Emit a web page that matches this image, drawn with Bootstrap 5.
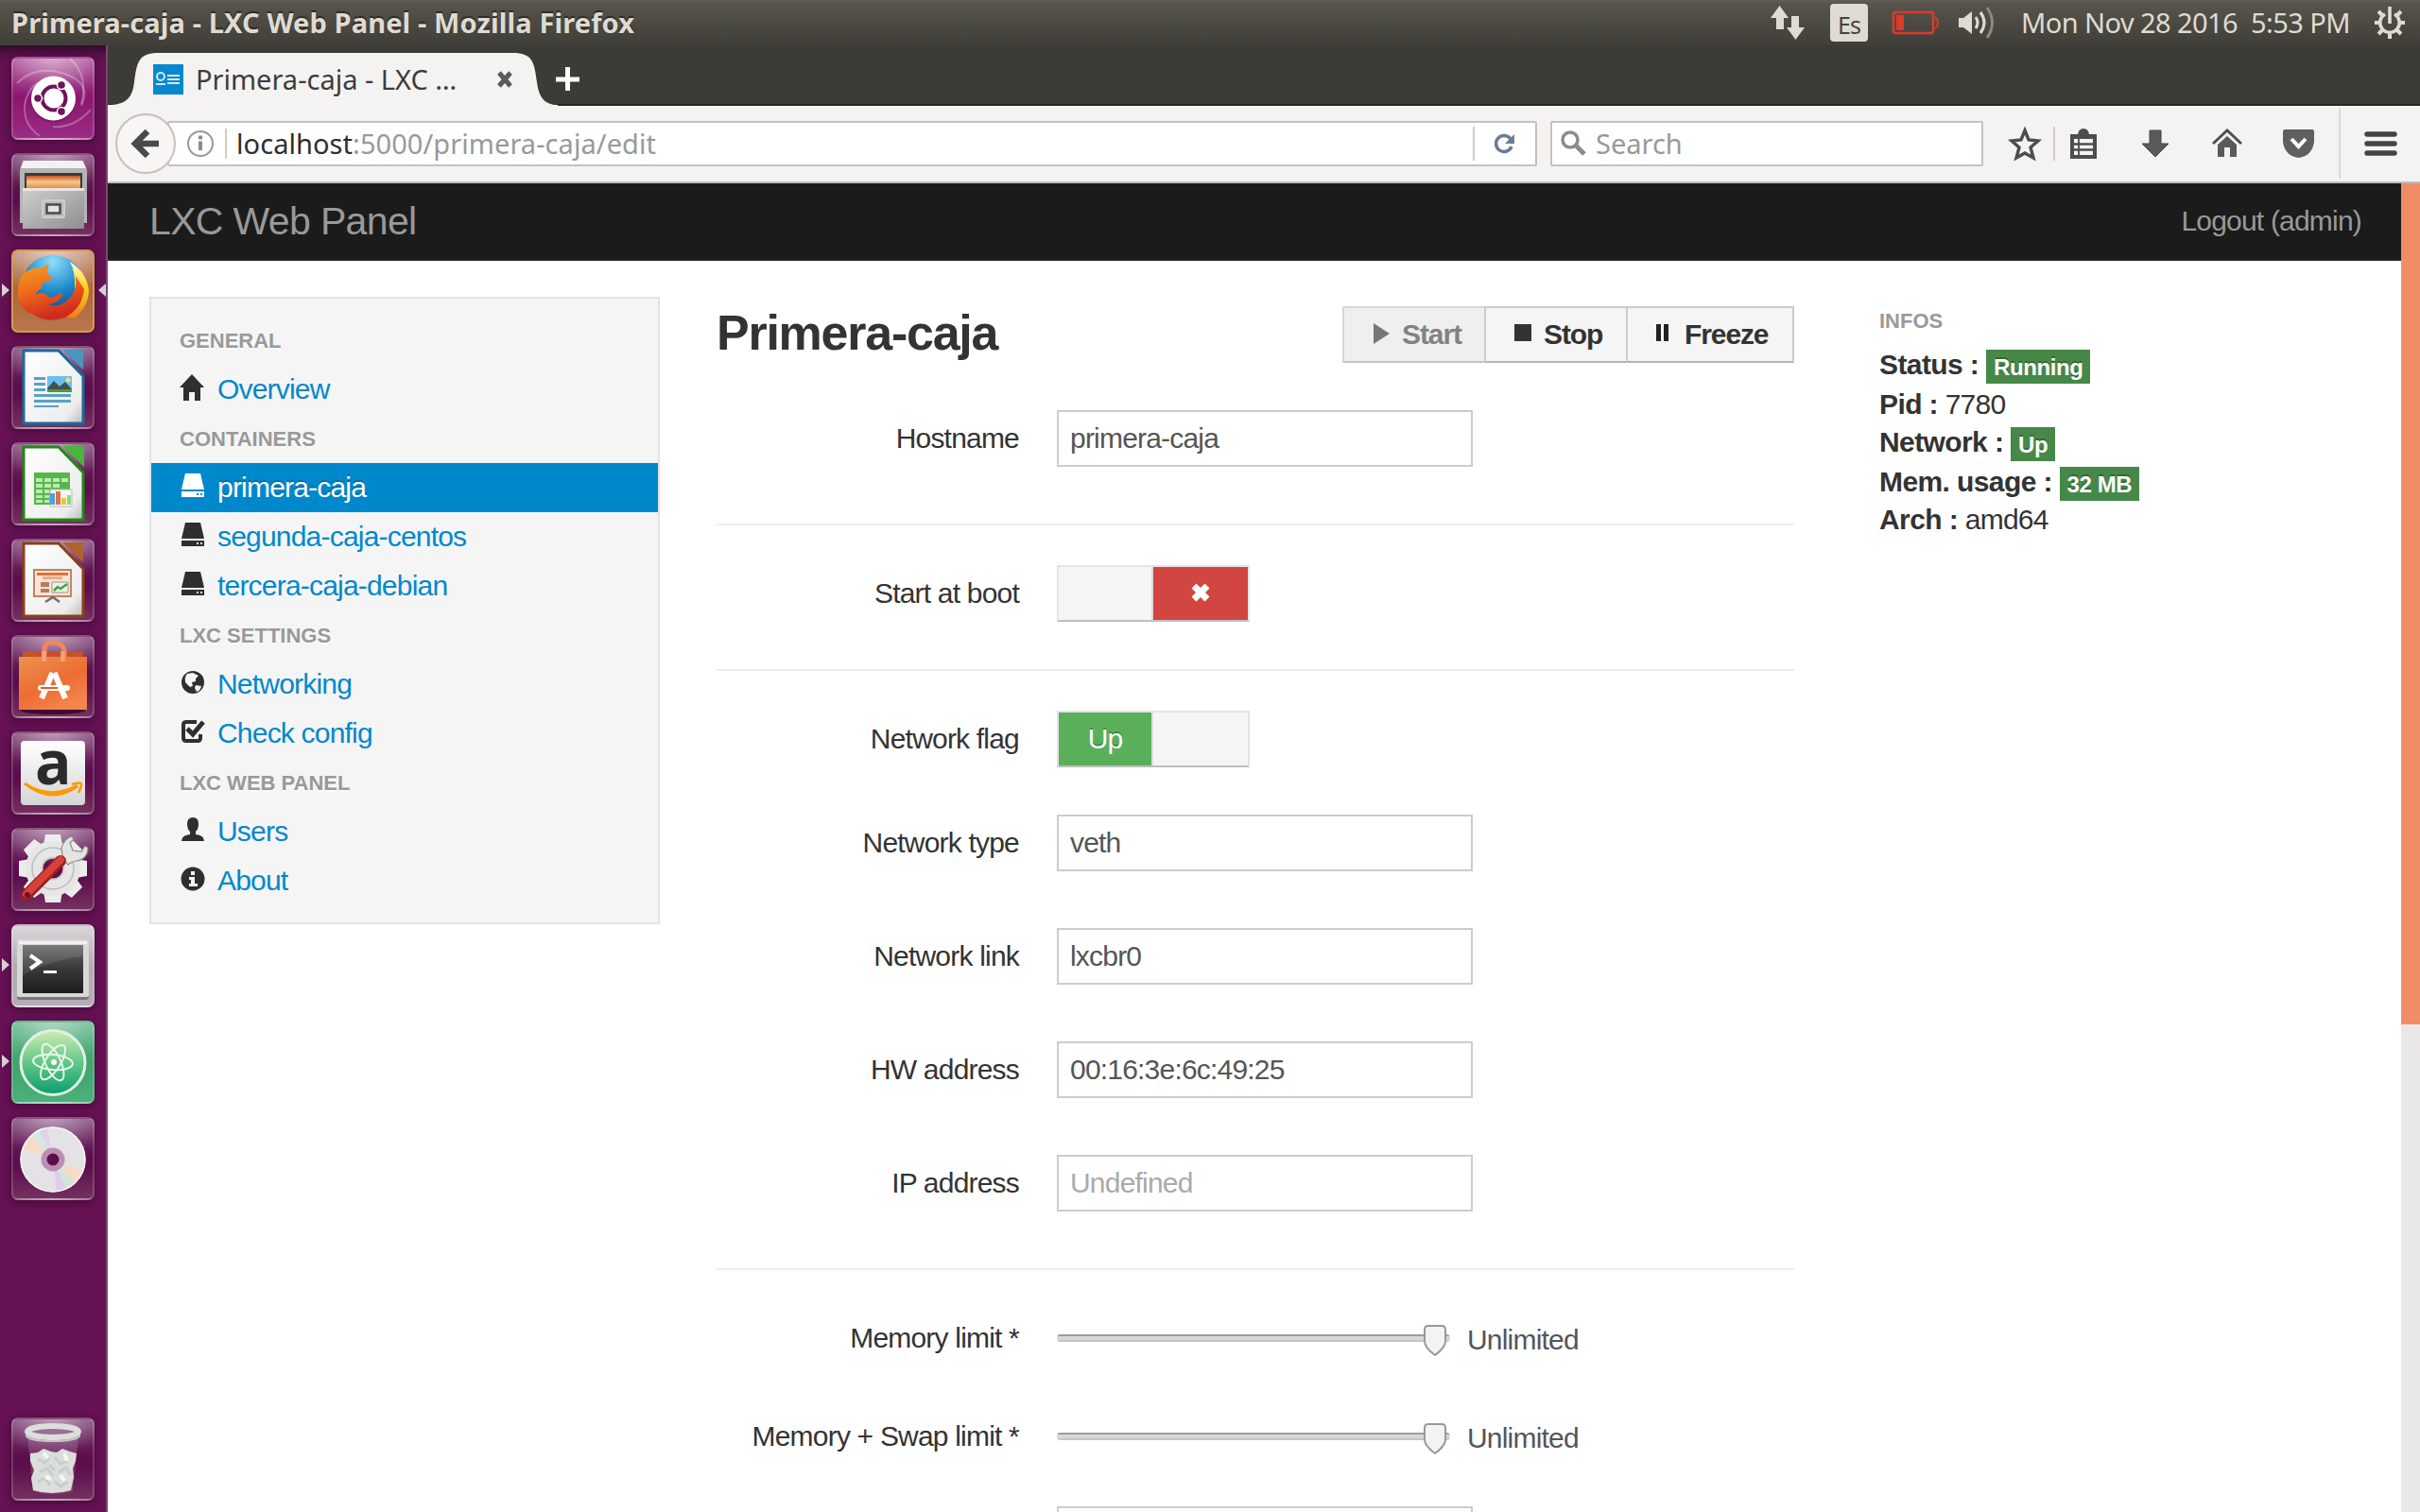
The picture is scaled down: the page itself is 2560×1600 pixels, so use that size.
<!DOCTYPE html>
<html lang="en">
<head>
<meta charset="utf-8">
<title>Primera-caja - LXC Web Panel</title>
<link href="https://cdn.jsdelivr.net/npm/bootstrap@5.3.0/dist/css/bootstrap.min.css" rel="stylesheet">
<style>
html,body{width:2560px;height:1600px;overflow:hidden;background:#fff}
body{font-family:"Liberation Sans",sans-serif;font-size:30px;letter-spacing:-.8px;line-height:40px;color:#333}
.ui{font-family:"Noto Sans","Open Sans",sans-serif;letter-spacing:0}
svg{display:block;flex:none;overflow:visible}
.topbar{height:48px;background:linear-gradient(#5f5d52 0,#5f5d52 2px,#57554b 3px,#3f3e38 48px);color:#dfdbd2;line-height:48px}
.topbar .ttl{font-weight:700;font-size:29px;letter-spacing:.12px;margin-left:12px;text-shadow:0 -2px 1px #2b2a26}
.es{width:40px;height:40px;margin:0 25px 0 27px;background:#dfdbd2;color:#45443e;border-radius:4px;font-size:25px;line-height:44px;text-align:center;letter-spacing:-1px}
.clock{margin:0 26px 0 24px;font-size:29px;letter-spacing:-.57px}
.launch{width:114px;height:1552px;background:linear-gradient(#330a2b 0,#58104a 10px,#651153 22px);border-right:2px solid #7b4676;padding:12px 0 0 12px}
.tile{flex:none;width:88px;height:88px;border-radius:7px;margin-bottom:14px;position:relative;background:radial-gradient(ellipse 70px 40px at 50% -4px,rgba(255,255,255,.55),rgba(255,255,255,.12) 75%,rgba(255,255,255,0) 100%),linear-gradient(#783a6f,#5d0d4c 48%,#5d0d4c 60%,#74305f);border:2px solid rgba(255,255,255,.16);box-shadow:0 2px 6px 2px rgba(40,0,32,.35)}
.tile.t-trash{margin-top:216px;margin-bottom:0}
.tile>svg.ic{position:absolute;left:-2px;top:-2px}
.tile>svg.arl{position:absolute;left:-14px;top:34px}
.tile>svg.arr{position:absolute;left:90px;top:34px}
.t-dash{background:radial-gradient(ellipse 70px 46px at 50% -4px,rgba(255,255,255,.6),rgba(255,255,255,.1) 75%,rgba(255,255,255,0) 100%),linear-gradient(#a84792,#8a1670 50%,#9c2c84)}
.t-ff{background:radial-gradient(ellipse 70px 46px at 50% -4px,rgba(255,255,255,.6),rgba(255,255,255,.1) 75%,rgba(255,255,255,0) 100%),linear-gradient(#c08a6c,#ab683f 50%,#b8774a);border-color:#d49a55}
.t-term{background:linear-gradient(#dcd6db,#b3a9b2 50%,#b5adb5)}
.t-atom{background:radial-gradient(ellipse 70px 46px at 50% -4px,rgba(255,255,255,.5),rgba(255,255,255,.08) 75%,rgba(255,255,255,0) 100%),linear-gradient(#66b98d,#3fa36b 50%,#4bb07a)}
.tabs{height:64px;background:#3c3b37}
.tools{height:82px;background:#f4f3f2;border-bottom:2px solid #c1bfbb}
.tabt{position:absolute;left:93px;top:16px;font-size:29px;color:#3c3c3c}
.urlb{height:48px;background:#fff;border:2px solid #c6c1bb;border-radius:2px;font-size:29px;color:#999}
.vsep{width:2px;background:#d0ccc8}
.webnav{height:82px;background:#1b1b1b;border-bottom:2px solid #252525;color:#999;padding:0 42px 0 44px}
.brandt{font-size:41px;letter-spacing:-.65px;color:#999}
.thumbbar{width:20px;background:#e9e8e7}
.thumbbar>div{height:890px;background:#f08c66}
.side{width:540px;height:664px;background:#f5f5f5;border:2px solid #e3e3e3;padding:18px 0;margin:38px 0 0 44px}
.side .hd{height:52px;line-height:53px;padding-left:30px;font-size:22px;letter-spacing:0;font-weight:700;color:#999;text-shadow:0 2px 0 rgba(255,255,255,.5)}
.side a{height:52px;line-height:52px;padding-left:30px;color:#08c;text-decoration:none;display:flex;align-items:center;gap:12px}
.side a svg{width:28px;height:28px;fill:#2f2f2f;margin-top:-4px}
.side a.on{background:#08c;color:#fff;text-shadow:0 -2px 0 rgba(0,0,0,.2)}
.side a.on svg{fill:#fff}
.maincol{width:1140px;margin-left:60px;padding-top:48px}
.headrow{height:60px;margin-bottom:50px}
.maincol h3{font-size:52px;letter-spacing:-1.25px;font-weight:700;line-height:60px;margin:-2px 0 0}
.bt{width:150px;height:60px;background:#f5f5f5;border:2px solid #ccc;border-bottom-color:#b3b3b3;border-right-width:0;font-weight:700;letter-spacing:-1.1px;line-height:56px;display:flex;align-items:center;padding-left:30px}
.bt.dis{background:#efefef;color:#828282;border-color:#d6d6d6;border-bottom-color:#c6c6c6}
.bt.last{width:178px;border-right-width:2px}
.frow{height:60px;display:flex;align-items:center}
.frow>label{width:320px;margin-right:40px;text-align:right}
.inp{width:440px;height:60px;border:2px solid #ccc;color:#555;padding:0 12px;line-height:56px;background:#fff}
.gap60{margin-top:60px}.gap50{margin-top:50px}.gap44{margin-top:44px}
.rule{height:2px;background:#eee;margin-bottom:42px}
.tog{width:204px;height:60px;border:2px solid #e4e4e4;border-bottom-color:#bfbfbf;background:#f5f5f5;display:flex}
.tog>div{width:98px;height:56px;line-height:56px;display:flex;justify-content:center;align-items:center}
.tog>div+div{width:102px;border-left:2px solid #ddd}
.tog .off{background:#d14641}
.tog .onn{background:#5aaf5a;color:#fff;text-shadow:0 -2px 0 rgba(0,0,0,.25)}
.trk{width:416px;height:8px;border-radius:4px;background:linear-gradient(#9c9c9c 0,#9c9c9c 2px,#d8d8d8 2px,#d8d8d8 6px,#c4c4c4 6px);position:relative}
.trk svg{position:absolute;left:387px;top:-10px}
.unl{margin:3px 0 0 18px;color:#555}
.cutrow{height:6px;overflow:hidden;align-items:flex-start}
.info{margin:48px 0 0 90px;white-space:nowrap}
.info .cap{font-size:22px;letter-spacing:0;font-weight:700;color:#999;line-height:32px;height:42px}
.info .ln{height:40px;display:flex}
.info .ln.tall{height:42px}
.info b{letter-spacing:-.6px;white-space:pre}
.lab{background:#468847;color:#fff;font-weight:700;font-size:24px;letter-spacing:-.4px;line-height:37px;height:36px;padding:0 8px;text-shadow:0 -2px 0 rgba(0,0,0,.25);margin-top:4px}
</style>
</head>
<body>
<div class="topbar ui d-flex align-items-center">
  <span class="ttl">Primera-caja - LXC Web Panel - Mozilla Firefox</span>
  <div class="ms-auto d-flex align-items-center">
    <svg width="36" height="36" viewBox="0 0 36 36" fill="#dfdbd2"><path d="M6 25V13H0L9.500 0 19 13h-5v12zM22 11h8v12h6L26.500 36 17 23h5z"/></svg>
    <div class="es">Es</div>
    <svg width="50" height="28" viewBox="0 0 50 28"><rect x="2" y="3" width="42" height="22" rx="2" fill="none" stroke="#df382c" stroke-width="2.600"/><path d="M5 6h8v16H5z" fill="#df382c"/><path d="M46 8q3 2 3 6t-3 6" fill="none" stroke="#df382c" stroke-width="2"/></svg>
    <svg width="42" height="36" viewBox="0 0 42 36" style="margin-left:21px" fill="none" stroke="#dfdbd2" stroke-width="3"><path d="M0 13h5l9-7v24l-9-7H0z" fill="#dfdbd2" stroke="none"/><path d="M18 12q4 6 0 12"/><path d="M23 7q8 11 0 22"/><path d="M30 2q11 16 0 32" stroke="#8b887e"/></svg>
    <span class="clock">Mon Nov 28 2016&nbsp; 5:53 PM</span>
    <svg width="32" height="34" viewBox="-16 -17 32 34" style="margin-right:16px" fill="none" stroke="#dfdbd2"><path d="M-5-9A10.300 10.300 0 1 0 5-9" stroke-width="3.600"/><path d="M0-17V1" stroke-width="3.600"/><path d="M-12 0h-4M12 0h4M0 12v5M-8-8l-4-4M8-8l4-4M-8 8l-4 4M8 8l4 4" stroke-width="4"/></svg>
  </div>
</div>
<div class="d-flex">
<div class="launch d-flex flex-column">
  <div class="tile t-dash"><svg class="ic" width="88" height="88" viewBox="0 0 88 88"><g fill="none" stroke="#fff" stroke-opacity=".28" stroke-width="2"><path d="M6 28Q26 8 56 18T74 52"/><path d="M62 2Q82 20 74 50"/><path d="M84 56Q66 76 44 74"/><path d="M30 84Q10 70 15 46 20 32 28 28"/></g><circle cx="44.500" cy="45.500" r="24" fill="#500c42" opacity=".35"/><circle cx="44.500" cy="44" r="23.500" fill="#fff"/><circle cx="45" cy="44" r="12.500" fill="none" stroke="#6f1459" stroke-width="4"/><g fill="#6f1459" stroke="#fff" stroke-width="1.500"><circle cx="28" cy="44" r="4.500"/><circle cx="53" cy="30" r="4.500"/><circle cx="53" cy="58" r="4.500"/></g></svg></div>
  <div class="tile"><svg class="ic" width="88" height="88" viewBox="0 0 88 88"><defs><linearGradient id="g1" x2="1" y2="1"><stop stop-color="#d0d0d0"/><stop offset="1" stop-color="#8e8e8e"/></linearGradient><linearGradient id="g2" x2="0" y2="1"><stop stop-color="#c8532a"/><stop offset=".5" stop-color="#f5c88e"/><stop offset="1" stop-color="#e58e3e"/></linearGradient></defs><path d="M12 8h64l4 10v56H9V18z" fill="#b4b4b4"/><path d="M13 8h62l4 8H10z" fill="#f2f2f2"/><path d="M14 21h61v18H14z" fill="#3d3a38"/><path d="M16 24h57v13H16z" fill="url(#g2)"/><path d="M12 37h65v43H12z" fill="url(#g1)"/><path d="M12 37h65v3H12z" fill="#e6e6e6"/><rect x="33" y="50" width="23" height="18" rx="2" fill="#bcbcbc" stroke="#cfcfcf" stroke-width="2"/><path d="M37.500 54.500h14v9h-14z" fill="#e4e4e4" stroke="#4a4a4a" stroke-width="2.500"/></svg></div>
  <div class="tile t-ff"><svg class="arl" width="10" height="14"><path d="M2 0l8 7-8 7z" fill="#d5d0d4"/></svg><svg class="arr" width="10" height="14"><path d="M8 0L0 7l8 7z" fill="#d5d0d4"/></svg><svg class="ic" width="88" height="88" viewBox="0 0 88 88"><defs><radialGradient id="f1" cx=".5" cy=".1" r="1"><stop stop-color="#8fe0fb"/><stop offset=".45" stop-color="#1f8ccc"/><stop offset=".85" stop-color="#143a7c"/></radialGradient><linearGradient id="f2" x2=".3" y2="1"><stop stop-color="#f8a11f"/><stop offset=".5" stop-color="#ee6a1c"/><stop offset="1" stop-color="#cf2a1d"/></linearGradient><linearGradient id="f3" x2="0" y2="1"><stop stop-color="#fffbd0"/><stop offset=".45" stop-color="#ffd51c"/><stop offset="1" stop-color="#ef7a1b"/></linearGradient></defs><circle cx="44" cy="40" r="34" fill="url(#f1)"/><path d="M62 13Q80 24 82 44 81 62 66 73L52 70Q68 56 67 40 68 24 62 13z" fill="url(#f3)"/><path d="M15 15q-3 5-1 9l9-4q7-1 10 0 3-4 7-5-3 7-1 12 4 0 4 3-2 4-9 5-2 2-2 6-5 2-6 7 8-5 13 2 5 2 11-3 3-2 4 1-4 9-15 10 12 5 22-6 9-8 7-24l9 14q-2 20-20 30-20 7-35-4Q5 63 7 42 8 30 14 25z" fill="url(#f2)"/></svg></div>
  <div class="tile"><svg class="ic" width="88" height="88" viewBox="0 0 88 88"><defs><linearGradient id="pg" x2="1" y2="1"><stop stop-color="#fff"/><stop offset=".8" stop-color="#ededed"/><stop offset="1" stop-color="#bbb"/></linearGradient></defs><path d="M13 5h37l26 27v50H13z" fill="url(#pg)" stroke="#196c9b" stroke-width="3"/><path d="M54 4h22v21z" fill="#4b95c0"/><path d="M24 33h12v3H24zM24 39h12v3H24zM24 45h12v3H24zM24 51h39v3H24zM24 57h39v3H24zM24 63h26v2H24z" fill="#5b9fc6"/><path d="M38 32h26v17H38z" fill="#6cc0ee"/><path d="M38 45l7-8 6 6 6-5 7 8v3H38z" fill="#43524e"/><path d="M38 46h26v3H38z" fill="#4f9a36"/><circle cx="60" cy="36" r="2.500" fill="#f8e45a"/></svg></div>
  <div class="tile"><svg class="ic" width="88" height="88" viewBox="0 0 88 88"><path d="M13 5h37l26 27v50H13z" fill="url(#pg)" stroke="#1f8a15" stroke-width="3"/><path d="M54 4h23v22z" fill="#48b63a"/><path d="M24 32h38v34H24z" fill="#55b749"/><path d="M26 38h7v4h-7zM35 38h7v4h-7zM44 38h7v4h-7zM53 38h7v4h-7zM26 44h7v4h-7zM35 44h7v4h-7zM44 44h7v4h-7zM26 50h7v4h-7zM35 50h5v4h-5zM26 56h7v3h-7zM35 56h5v3h-5zM26 61h7v3h-7zM35 61h5v3h-5z" fill="#bfe8b4"/><path d="M41 50h23v18H41z" fill="#f6f6f6" stroke="#bbb"/><path d="M41 54h5v12h-5z" fill="#4aa3dd"/><path d="M47 52h5v14h-5z" fill="#d9734b"/><path d="M53 59h5v7h-5z" fill="#f0c33a"/><path d="M59 56h4v10h-4z" fill="#8bd97f"/></svg></div>
  <div class="tile"><svg class="ic" width="88" height="88" viewBox="0 0 88 88"><path d="M13 5h37l26 27v50H13z" fill="url(#pg)" stroke="#8a4216" stroke-width="3"/><path d="M54 4h22v21z" fill="#b0622f"/><path d="M24 33h39v28H24z" fill="#fbe3d5" stroke="#c5825c" stroke-width="2"/><path d="M27 36h33v3H27z" fill="#d9713e"/><path d="M33 40h21v3H33z" fill="#efa98a"/><path d="M31 46h9v5h-9zM31 53h9v4h-9z" fill="#b97c59"/><path d="M43 46h17v11H43z" fill="#e9f3e6" stroke="#979797"/><path d="M45 55l4-4 3 2 7-5" stroke="#43a535" stroke-width="2.500" fill="none"/><path d="M36 67l8-5 7 5" fill="none" stroke="#6f6f6f" stroke-width="2.500"/></svg></div>
  <div class="tile"><svg class="ic" width="88" height="88" viewBox="0 0 88 88"><defs><linearGradient id="b1" x2=".6" y2="1"><stop stop-color="#e9944f"/><stop offset=".6" stop-color="#ee6c31"/><stop offset="1" stop-color="#f3854d"/></linearGradient></defs><ellipse cx="44" cy="80" rx="34" ry="4" fill="#2a001f" opacity=".7"/><path d="M12 17h64v10H12z" fill="#c8502a"/><path d="M35 29V15q0-7 9-7t12 7v14" fill="none" stroke="#f08660" stroke-width="5"/><path d="M8 23h72v56H8z" fill="url(#b1)"/><path d="M34.500 28V17M54.500 28V17" stroke="#f5a27e" stroke-width="4.500"/><path d="M32 67l11.500-27M57 67L45.500 40" stroke="#fff" stroke-width="6" fill="none"/><path d="M31 56h28" stroke="#fff" stroke-width="6" stroke-linecap="round"/><path d="M31 56h18" stroke="#e45f2a" stroke-width="2"/></svg></div>
  <div class="tile"><svg class="ic" width="88" height="88" viewBox="0 0 88 88"><defs><linearGradient id="a1" x2="0" y2="1"><stop stop-color="#fff"/><stop offset="1" stop-color="#d5d5d5"/></linearGradient></defs><rect x="10" y="10" width="68" height="68" rx="4" fill="url(#a1)"/><text x="44" y="56" text-anchor="middle" font-family="Open Sans" font-weight="700" font-size="64" fill="#2b2b2b">a</text><path d="M14 56q28 22 56 3l-1-2q-28 15-54-2z" fill="#f90" stroke="#f90" stroke-width="1.500"/><path d="M64 56q9-3 10 0 0 3-3 9" fill="none" stroke="#f90" stroke-width="2.600"/></svg></div>
  <div class="tile"><svg class="ic" width="88" height="88" viewBox="0 0 88 88"><g transform="translate(44 43)"><g fill="#ececec"><path id="tt" d="M-8-36H8l2 12h-20z"/><use href="#tt" transform="rotate(45)"/><use href="#tt" transform="rotate(90)"/><use href="#tt" transform="rotate(135)"/><use href="#tt" transform="rotate(180)"/><use href="#tt" transform="rotate(225)"/><use href="#tt" transform="rotate(270)"/><use href="#tt" transform="rotate(315)"/></g><circle r="20" fill="none" stroke="#e6e6e6" stroke-width="18"/><circle r="22" fill="none" stroke="#bdbdbd" stroke-width="1.500"/><circle r="11.500" fill="none" stroke="#ccc" stroke-width="2"/></g><path d="M55 34l-2-12q2-10 11-13l2 3-4 4 3 8 9 1 4-6 3 2q0 12-12 14-6 1-9 4z" fill="#e4e4e0" stroke="#888" stroke-width="1.200"/><path d="M16 71l36-36" stroke="#9d1f1a" stroke-width="12" stroke-linecap="round"/><path d="M16 70l36-36" stroke="#d9403a" stroke-width="8" stroke-linecap="round"/><circle cx="17" cy="71" r="3" fill="#6a0f2a"/></svg></div>
  <div class="tile t-term"><svg class="arl" width="10" height="14"><path d="M2 0l8 7-8 7z" fill="#d5d0d4"/></svg><svg class="ic" width="88" height="88" viewBox="0 0 88 88"><defs><linearGradient id="k1" x2="0" y2="1"><stop stop-color="#6b6b6b"/><stop offset=".5" stop-color="#383838"/><stop offset="1" stop-color="#1c1c1c"/></linearGradient></defs><rect x="6" y="17" width="76" height="63" rx="3" fill="#777"/><rect x="6" y="16" width="76" height="61" rx="2" fill="#d8d8d6"/><rect x="8" y="18" width="72" height="3" fill="#f2f2f2"/><rect x="12" y="22" width="64" height="51" fill="url(#k1)"/><path d="M12 22h64v12Q46 36 12 54z" fill="#fff" opacity=".1"/><path d="M20 33l10 7-10 7" fill="none" stroke="#fff" stroke-width="4"/><path d="M34 50.500h14" stroke="#fff" stroke-width="3"/></svg></div>
  <div class="tile t-atom"><svg class="arl" width="10" height="14"><path d="M2 0l8 7-8 7z" fill="#d5d0d4"/></svg><svg class="ic" width="88" height="88" viewBox="0 0 88 88"><defs><linearGradient id="o1" x2="0" y2="1"><stop stop-color="#cdecb0"/><stop offset=".5" stop-color="#62c78a"/><stop offset="1" stop-color="#0a9d6c"/></linearGradient></defs><circle cx="44" cy="44.500" r="34" fill="url(#o1)" stroke="#e2efe6" stroke-width="3"/><g fill="none" stroke="#e6f7e9" stroke-width="2"><ellipse cx="44" cy="44" rx="21" ry="8" transform="rotate(5 44 44)"/><ellipse cx="44" cy="44" rx="21" ry="8" transform="rotate(65 44 44)"/><ellipse cx="44" cy="44" rx="21" ry="8" transform="rotate(122 44 44)"/></g><circle cx="45" cy="44" r="3" fill="#fff"/></svg></div>
  <div class="tile"><svg class="ic" width="88" height="88" viewBox="0 0 88 88"><circle cx="44" cy="45" r="34.500" fill="#e4e2e4"/><path d="M44 45L12 33q3-9 9-14z" fill="#f6dcc8"/><path d="M44 45L21 19q4-4 8-6z" fill="#d3e8de"/><path d="M44 45L29 13q5-2 9-2z" fill="#e0d2ea"/><path d="M44 45l31 13q-3 7-8 12z" fill="#f6dcc8"/><path d="M44 45l23 26q-4 3-8 5z" fill="#cfe6dc"/><path d="M44 45l14 31q-5 2-10 2z" fill="#dccdea"/><circle cx="44" cy="45" r="34" fill="none" stroke="#f6f6f6" stroke-width="1.500"/><circle cx="44" cy="45" r="9.500" fill="#6d1a5b" stroke="#bb8fb4" stroke-width="6"/><circle cx="44" cy="45" r="6" fill="#590f49"/></svg></div>
  <div class="tile t-trash"><svg class="ic" width="88" height="88" viewBox="0 0 88 88"><path d="M17 20l6 58q20 6 42 0l6-58z" fill="#b78fae" opacity=".3"/><path d="M20 38l8-1 6-4 8 3 6 1 6-4 8 3 7 2-1 8-3 8 1 9-3 14q-20 6-40 0l-2-13 3-8-4-10z" fill="#dcdedb"/><path d="M28 44l8 4 4-6M46 42l6 7 8-3M30 58l8-4 6 8M50 58l8-5 5 8M28 68l8-4 5 8M46 68l6 5 8-5M40 50l6 6" fill="none" stroke="#c9ccc7" stroke-width="3"/><path d="M34 38l5 5M56 38l3 8M36 63l6 2M52 61l4 6" stroke="#f6f7f5" stroke-width="4"/><ellipse cx="44" cy="15" rx="27" ry="6" fill="#9a6f92" stroke="#dcdedc" stroke-width="6"/><path d="M15 17q5 7 29 7t29-7v3q-4 6-29 6t-29-6z" fill="#c3c6c3"/></svg></div>
</div>
<div class="flex-grow-1">
  <div class="tabs ui">
    <div class="d-flex position-relative">
      <svg width="2446" height="64"><rect y="62" width="2446" height="2" fill="#272623"/><path d="M0 64v-1c20 0 26-8 28-24 3-21 4-31 26-31h374c22 0 23 10 26 31 2 16 8 24 22 24v1z" fill="#f4f3f2"/><path d="M48 20h32v32H48z" fill="#0a88cf"/><g fill="none" stroke="#cfe9f8" stroke-width="2"><circle cx="56" cy="33" r="4"/><path d="M63 32h13M63 36h13M63 40h13M51 41h10"/></g><path d="M414 29l12 14M426 29l-12 14" stroke="#5a5a5a" stroke-width="5"/><path d="M474 36h25M486.500 23v25" stroke="#fff" stroke-width="5"/></svg>
      <span class="tabt">Primera-caja - LXC …</span>
    </div>
  </div>
  <div class="tools ui d-flex align-items-center">
    <svg width="66" height="66" viewBox="0 0 66 66" style="margin-left:8px;z-index:2"><circle cx="32" cy="33" r="31" fill="#f7f6f5" stroke="#c6c1bb" stroke-width="2"/><path d="M34 20L21 33l13 13M23 33h23" fill="none" stroke="#4a4a4a" stroke-width="6.500"/></svg>
    <div class="urlb d-flex align-items-center" style="width:1449px;margin-left:-11px;padding-left:18px">
      <svg width="30" height="30" viewBox="0 0 30 30"><circle cx="15" cy="15" r="13" fill="none" stroke="#999" stroke-width="2"/><path d="M13 12.500h4V22h-4z" fill="#8a8a8a"/><circle cx="15" cy="8.500" r="2.200" fill="#8a8a8a"/></svg>
      <div class="vsep" style="height:32px;margin:0 10px 0 11px"></div>
      <span style="letter-spacing:.06px"><span style="color:#2e2e2e">localhost</span>:5000/primera-caja/edit</span>
      <div class="vsep ms-auto" style="height:36px"></div>
      <svg width="28" height="28" viewBox="0 0 28 28" style="margin:0 18px 0 18px"><path d="M20 9A8.500 8.500 0 1 0 21 17" fill="none" stroke="#6b7d92" stroke-width="3.500"/><path d="M24 4v10H14z" fill="#6b7d92"/></svg>
    </div>
    <div class="urlb d-flex align-items-center" style="width:458px;margin-left:14px;padding-left:8px">
      <svg width="30" height="30" viewBox="0 0 30 30"><circle cx="11" cy="11" r="8" fill="none" stroke="#8b8b8b" stroke-width="3.500"/><path d="M17 17l9 9" stroke="#8b8b8b" stroke-width="5"/></svg>
      <span style="margin-left:8px">Search</span>
    </div>
    <svg width="34" height="36" viewBox="0 0 34 36" style="margin-left:27px"><path d="M17 4l4 10 10 1-8 7 3 11-9-5-9 5 3-11-8-7 10-1z" fill="none" stroke="#4d4d4d" stroke-width="3.400"/></svg>
    <div class="vsep" style="height:36px;margin:0 16px 0 13px"></div>
    <svg width="28" height="32" viewBox="0 0 28 32"><path d="M0 6h8q1-6 6-6t6 6h8v26H0z" fill="#4d4d4d"/><path d="M4 11h20v17H4z" fill="#f4f3f2"/><path d="M4 16.500h20M4 22.500h20" stroke="#4d4d4d" stroke-width="2.500"/><path d="M9 11v17" stroke="#4d4d4d" stroke-width="1.800"/></svg>
    <svg width="28" height="30" viewBox="0 0 28 30" style="margin-left:48px"><path d="M8 1h12v14h8L14 29 0 15h8z" fill="#5a5a5a" stroke="#454545"/></svg>
    <svg width="32" height="30" viewBox="0 0 32 30" style="margin-left:46px"><path d="M1 15L16 1l15 14" fill="none" stroke="#4f4f4f" stroke-width="3"/><path d="M6 16L16 7l10 9v13h-7V19h-6v10H6z" fill="#5a5a5a"/></svg>
    <svg width="33" height="30" viewBox="0 0 33 30" style="margin-left:43px"><path d="M0 2q0-2 2-2h29q2 0 2 2v11q-2 15-16.500 17Q2 28 0 13z" fill="#5f5f5f"/><path d="M9 10l7.500 8L24 10" fill="none" stroke="#fff" stroke-width="4"/></svg>
    <div class="vsep" style="height:74px;margin:0 26px;background:#dad8d6"></div>
    <svg width="33" height="28" viewBox="0 0 33 28"><path d="M2 4h29M2 14h29M2 24h29" stroke="#444" stroke-width="5.500" stroke-linecap="round"/></svg>
  </div>
  <div class="d-flex" style="height:1406px">
    <div class="flex-grow-1">
      <div class="webnav d-flex align-items-center justify-content-between"><span class="brandt">LXC Web Panel</span><span>Logout (admin)</span></div>
      <div class="d-flex align-items-start">
        <div class="side">
          <div class="hd">GENERAL</div>
          <a href="#"><svg viewBox="0 0 28 28"><path d="M13 0l13 14h-4v14h-6v-9h-6v9H4V14H0z"/></svg>Overview</a>
          <div class="hd">CONTAINERS</div>
          <a href="#" class="on"><svg viewBox="0 0 28 28"><path id="dk" fill-rule="evenodd" d="M6 1h16l4 17H2zM2 20h24v6H2zM18 22v2h2v-2zM22 22v2h2v-2z"/></svg>primera-caja</a>
          <a href="#"><svg viewBox="0 0 28 28"><use href="#dk"/></svg>segunda-caja-centos</a>
          <a href="#"><svg viewBox="0 0 28 28"><use href="#dk"/></svg>tercera-caja-debian</a>
          <div class="hd">LXC SETTINGS</div>
          <a href="#"><svg viewBox="0 0 28 28"><circle cx="14" cy="14" r="12"/><path d="M8 5l6-1 4 2 2 1-3 3v3l-4 1 1 4-3 1-5-5q-1-6 2-9zM17 17l6 1q-1 5-5 6l-2-4z" fill="#f5f5f5"/></svg>Networking</a>
          <a href="#"><svg viewBox="0 0 28 28"><path d="M18 4H7Q4 4 4 7v14q0 3 3 3h12q3 0 3-3v-4" fill="none" stroke="#2f2f2f" stroke-width="4"/><path d="M8 11l6 6L25 4" fill="none" stroke="#2f2f2f" stroke-width="5"/></svg>Check config</a>
          <div class="hd">LXC WEB PANEL</div>
          <a href="#"><svg viewBox="0 0 28 28"><path d="M14 1q6 0 6 7 0 5-3 8v3q9 1 9 7H2q0-6 9-7v-3q-3-3-3-8 0-7 6-7z"/></svg>Users</a>
          <a href="#"><svg viewBox="0 0 28 28"><circle cx="14" cy="14" r="12.500"/><path d="M12 6h4v4h-4zM10 12h6v7h3v3h-9v-3h2v-4h-2z" fill="#f5f5f5"/></svg>About</a>
        </div>
        <div class="maincol">
          <div class="headrow d-flex justify-content-between">
            <h3>Primera-caja</h3>
            <div class="d-flex">
              <div class="bt dis"><svg width="20" height="24" viewBox="0 0 20 24" style="margin:-2px 11px 0 0"><path d="M1 1l17 11L1 23z" fill="#777"/></svg>Start</div>
              <div class="bt"><svg width="18" height="18" style="margin:0 13px 4px 0"><path d="M0 0h18v18H0z" fill="#333"/></svg>Stop</div>
              <div class="bt last"><svg width="16" height="18" style="margin:0 14px 4px 0"><path d="M0 0h5v18H0zM8 0h5v18H8z" fill="#222"/></svg>Freeze</div>
            </div>
          </div>
          <div class="frow"><label>Hostname</label><div class="inp">primera-caja</div></div>
          <div class="rule gap60"></div>
          <div class="frow"><label>Start at boot</label><div class="tog"><div></div><div class="off"><svg width="22" height="22" viewBox="0 0 22 22" style="margin-top:-3px"><path d="M4 4l14 14M18 4L4 18" stroke="#fff" stroke-width="7"/></svg></div></div></div>
          <div class="rule gap50"></div>
          <div class="frow"><label>Network flag</label><div class="tog"><div class="onn">Up</div><div></div></div></div>
          <div class="frow gap50"><label>Network type</label><div class="inp">veth</div></div>
          <div class="frow gap60"><label>Network link</label><div class="inp">lxcbr0</div></div>
          <div class="frow gap60"><label>HW address</label><div class="inp">00:16:3e:6c:49:25</div></div>
          <div class="frow gap60"><label>IP address</label><div class="inp" style="color:#aaa">Undefined</div></div>
          <div class="rule gap60"></div>
          <div class="frow"><label>Memory limit *</label><div class="trk"><svg width="26" height="34" viewBox="0 0 26 34"><path id="th" d="M6 1h14q4 0 4 4v12q0 7-11 15Q2 24 2 17V5q0-4 4-4z" fill="#f3f3f3" stroke="#999" stroke-width="2"/></svg></div><span class="unl">Unlimited</span></div>
          <div class="frow gap44"><label>Memory + Swap limit *</label><div class="trk"><svg width="26" height="34" viewBox="0 0 26 34"><use href="#th"/></svg></div><span class="unl">Unlimited</span></div>
          <div class="frow gap44 cutrow"><label></label><div class="inp"></div></div>
        </div>
        <div class="info">
          <div class="cap">INFOS</div>
          <div class="ln tall"><b>Status : </b><span class="lab">Running</span></div>
          <div class="ln"><b>Pid : </b>7780</div>
          <div class="ln tall"><b>Network : </b><span class="lab">Up</span></div>
          <div class="ln"><b>Mem. usage : </b><span class="lab">32 MB</span></div>
          <div class="ln"><b>Arch : </b>amd64</div>
        </div>
      </div>
    </div>
    <div class="thumbbar"><div></div></div>
  </div>
</div>
</div>
<script src="https://cdn.jsdelivr.net/npm/bootstrap@5.3.0/dist/js/bootstrap.bundle.min.js"></script>
</body>
</html>
